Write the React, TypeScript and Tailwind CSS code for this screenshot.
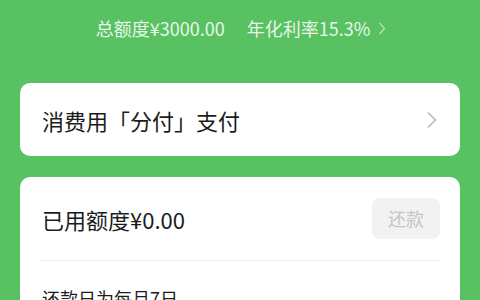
export default function App() {
    return (
        <div
            className="w-[480px] h-[300px] overflow-hidden bg-[#58c161] flex flex-col px-5"
            style={{ fontFamily: '"Noto Sans CJK SC", "Noto Sans", sans-serif' }}
        >
            {/* Summary */}
            <div className="shrink-0 h-[56px] flex items-center justify-center gap-[22px] text-[18px] text-[#e8f6e9] pl-[2px]">
                <span>总额度¥3000.00</span>
                <span className="flex items-center gap-[8px]">
                    年化利率15.3%
                    <svg width="8" height="13" viewBox="0 0 8 13" fill="none">
                        <polyline points="1.5,1 6.5,6.5 1.5,12" stroke="#b9e3bd" strokeWidth="1.3" />
                    </svg>
                </span>
            </div>

            {/* Pay entry */}
            <div className="shrink-0 mt-[27px] h-[73px] bg-white rounded-[10px] flex items-center justify-between pl-[22px] pr-[22px]">
                <span className="text-[22px] text-[#1c1c1c] leading-none">消费用「分付」支付</span>
                <svg width="12" height="18" viewBox="0 0 12 18" fill="none">
                    <polyline points="2,1.5 9.5,9 2,16.5" stroke="#b5b5b5" strokeWidth="1.4" />
                </svg>
            </div>

            {/* Usage card */}
            <div className="shrink-0 mt-[21px] bg-white rounded-[10px] px-[20px] flex flex-col">
                <div className="h-[83px] flex items-center justify-between pl-[2px]">
                    <span className="text-[22px] text-[#1c1c1c] leading-none">已用额度¥0.00</span>
                    <div className="w-[68px] h-[41px] rounded-[8px] bg-[#f2f2f2] flex items-center justify-center text-[18px] text-[#c6c6c6]">
                        还款
                    </div>
                </div>
                <div className="h-px bg-[#ededed]" />
                <div className="pt-[28px] pb-4 pl-[2px] text-[18px] leading-[18px] text-[#1c1c1c]">还款日为每月7日</div>
            </div>
        </div>
    );
}
